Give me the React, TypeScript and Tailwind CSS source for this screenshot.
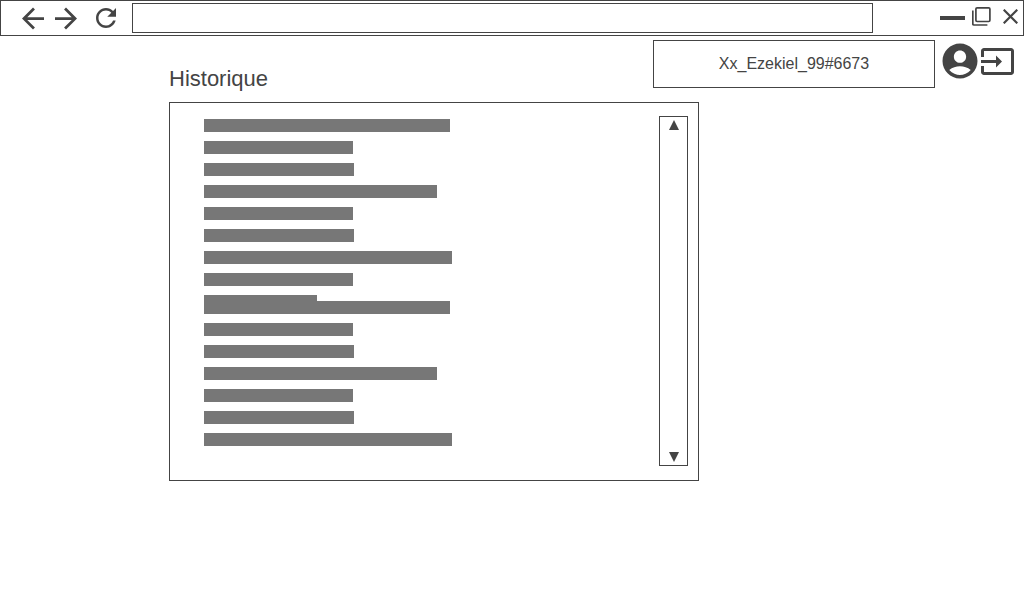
import { MdAccountCircle } from 'react-icons/md';

const firstBatch = [
  'w-[246px]',
  'w-[149px]',
  'w-[150px]',
  'w-[233px]',
  'w-[149px]',
  'w-[150px]',
  'w-[248px]',
  'w-[149px]',
  'w-[113px]',
];

const secondBatch = firstBatch.slice(0, 7);

function Entries({ widths }: { widths: string[] }) {
  return (
    <ul className="flex flex-col gap-[9px]">
      {widths.map((width, i) => (
        <li key={i} className={`h-[13px] bg-[#777777] ${width}`} />
      ))}
    </ul>
  );
}

function BrowserBar() {
  return (
    <header className="flex h-9 items-center border border-[#444444] pr-[5px] pl-[21px]">
      <nav className="flex items-center">
        <button type="button" aria-label="Page précédente">
          <svg viewBox="4 3.6 16 16" className="size-[22px] overflow-visible" fill="currentColor">
            <path d="M20 11H7.83l5.59-5.59L12 4l-8 8 8 8 1.41-1.41L7.83 13H20v-2z" />
          </svg>
        </button>
        <button type="button" aria-label="Page suivante" className="ml-[11px]">
          <svg viewBox="4 3.6 16 16" className="size-[22px] overflow-visible" fill="currentColor">
            <path d="M12 4l-1.41 1.41L16.17 11H4v2h12.17l-5.58 5.59L12 20l8-8z" />
          </svg>
        </button>
        <button type="button" aria-label="Actualiser" className="ml-[19px]">
          <svg viewBox="4 4 16 16" className="size-5" fill="currentColor">
            <path d="M17.65 6.35C16.2 4.9 14.21 4 12 4c-4.42 0-7.99 3.58-7.99 8s3.57 8 7.99 8c3.73 0 6.84-2.55 7.73-6h-2.08c-.82 2.33-3.04 4-5.65 4-3.31 0-6-2.69-6-6s2.69-6 6-6c1.66 0 3.14.69 4.22 1.78L13 11h7V4l-2.35 2.35z" />
          </svg>
        </button>
      </nav>
      <input
        type="text"
        aria-label="Adresse"
        className="ml-4 h-[30px] min-w-0 flex-1 border border-[#444444] px-2 outline-none"
      />
      <div className="ml-[67px] flex items-center">
        <button type="button" aria-label="Réduire">
          <svg viewBox="0 0 25 4" className="h-1 w-[25px]" fill="currentColor">
            <path d="M0 0h25v4H0z" />
          </svg>
        </button>
        <button type="button" aria-label="Agrandir" className="ml-[7px] pb-1">
          <svg viewBox="0 0 19 19" className="size-[19px]" fill="none" stroke="currentColor" strokeWidth="1.7">
            <rect x="3.9" y="0.9" width="14" height="13.6" rx="1.2" />
            <path d="M0.8 3.4v13.4q0 1.2 1.2 1.2h13.4" />
          </svg>
        </button>
        <button type="button" aria-label="Fermer" className="ml-3 pb-1">
          <svg viewBox="0 0 15 15" className="size-[15px]" fill="none" stroke="currentColor" strokeWidth="2.2">
            <path d="M0.7 0.7l13.6 13.6M14.3 0.7L0.7 14.3" />
          </svg>
        </button>
      </div>
    </header>
  );
}

export default function App() {
  return (
    <div className="bg-white font-['Liberation_Sans',Arial,sans-serif] text-[#444444]">
      <BrowserBar />
      <main className="pt-1 pr-[10px] pb-8 pl-[169px]">
        <div className="flex items-start">
          <h1 className="pt-6 text-[22px] leading-[30px]">Historique</h1>
          <div className="ml-auto flex h-12 w-[282px] items-center justify-center border border-[#444444] text-base">
            Xx_Ezekiel_99#6673
          </div>
          <button type="button" aria-label="Profil" className="ml-1">
            <MdAccountCircle className="size-[42px]" />
          </button>
          <button type="button" aria-label="Déconnexion" className="pt-2">
            <svg viewBox="1 3 22 18" className="h-[27px] w-[33px]" fill="currentColor">
              <path d="M21 3.01H3c-1.1 0-2 .9-2 2V9h2V4.99h18v14.03H3V15H1v4.01c0 1.1.9 1.98 2 1.98h18c1.1 0 2-.88 2-1.98v-14c0-1.11-.9-2-2-2zM11 16l4-4-4-4v3H1v2h10v3z" />
            </svg>
          </button>
        </div>

        <section
          aria-label="Historique"
          className="mt-2 flex w-full max-w-[530px] justify-between border border-[#444444] pt-[13px] pr-[10px] pb-[14px] pl-[34px]"
        >
          <div className="pt-[3px] pb-5">
            <Entries widths={firstBatch} />
            <div className="-mt-[7px]">
              <Entries widths={secondBatch} />
            </div>
          </div>
          <div className="flex w-[29px] flex-col items-center justify-between border border-[#444444] py-[3px]">
            <button type="button" aria-label="Défiler vers le haut">
              <svg viewBox="0 0 10 10" className="size-[10px]" fill="currentColor">
                <path d="M5 0l5 10H0z" />
              </svg>
            </button>
            <button type="button" aria-label="Défiler vers le bas">
              <svg viewBox="0 0 10 10" className="size-[10px]" fill="currentColor">
                <path d="M0 0h10L5 10z" />
              </svg>
            </button>
          </div>
        </section>
      </main>
    </div>
  );
}
